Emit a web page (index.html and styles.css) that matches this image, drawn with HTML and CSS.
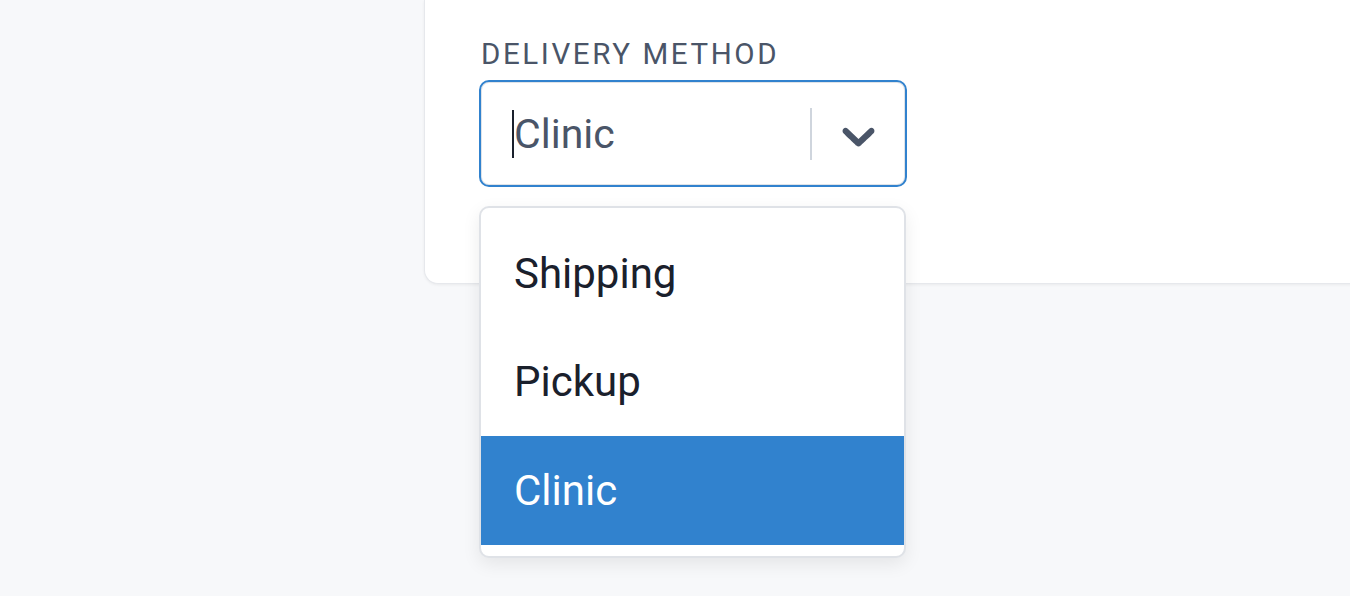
FILE: index.html
```html
<!DOCTYPE html>
<html lang="en">
<head>
<meta charset="utf-8">
<title>Delivery method</title>
<link rel="stylesheet" href="styles.css">
</head>
<body>
<div class="page">
  <section class="card">
    <label class="field-label">Delivery method</label>
    <div class="select">
      <div class="select-value">
        <span class="caret"></span><span class="value-text">Clinic</span>
      </div>
      <div class="indicators">
        <span class="separator"></span>
        <span class="dropdown-indicator">
          <svg viewBox="0 0 20 20" width="55" height="55" aria-hidden="true"><path d="M4.516 7.548c0.436-0.446 1.043-0.481 1.576 0l3.908 3.747 3.908-3.747c0.533-0.481 1.141-0.446 1.574 0 0.436 0.445 0.408 1.197 0 1.615-0.406 0.418-4.695 4.502-4.695 4.502-0.217 0.223-0.502 0.335-0.787 0.335s-0.57-0.112-0.789-0.335c0 0-4.287-4.084-4.695-4.502s-0.436-1.17 0-1.615z"/></svg>
        </span>
      </div>
    </div>
  </section>
  <ul class="menu">
    <li class="option">Shipping</li>
    <li class="option">Pickup</li>
    <li class="option option-selected">Clinic</li>
  </ul>
</div>
</body>
</html>
```

FILE: styles.css
```css
html, body {
  margin: 0;
  padding: 0;
}
body {
  background: #f7f8fa;
  font-family: Roboto, "Liberation Sans", Arial, sans-serif;
  overflow: hidden;
  width: 1350px;
  height: 596px;
}
.page {
  position: relative;
  height: 596px;
  padding-top: 0.02px;
}
.card {
  margin-left: 424px;
  width: 960px;
  box-sizing: border-box;
  padding: 37px 0 96px 54px;
  background: #ffffff;
  border: 1px solid #e6e8ec;
  border-top: none;
  border-radius: 0 0 0 14px;
  box-shadow: 0 1px 3px rgba(0, 0, 0, 0.06);
}
.field-label {
  display: block;
  font-size: 29.5px;
  line-height: 35px;
  letter-spacing: 2.6px;
  text-transform: uppercase;
  color: #4a5568;
  margin-bottom: 8px;
  padding-left: 2px;
}
.select {
  display: flex;
  align-items: center;
  width: 428px;
  height: 107px;
  box-sizing: border-box;
  border: 2px solid #3182ce;
  border-radius: 10px;
  background: #fff;
  box-shadow: inset 0 0 0 1px #dfe3e8;
}
.select-value {
  flex: 1;
  display: flex;
  align-items: center;
  padding-left: 31px;
}
.caret {
  width: 2px;
  height: 48px;
  background: #1a202c;
}
.value-text {
  font-size: 41px;
  color: #4a5568;
}
.indicators {
  display: flex;
  align-items: center;
  height: 100%;
}
.separator {
  width: 2px;
  height: 52px;
  background: #cfd5dd;
}
.dropdown-indicator {
  width: 93px;
  display: flex;
  justify-content: center;
  align-items: center;
  fill: #4a5568;
  padding-top: 3px;
}
.menu {
  position: absolute;
  top: 206px;
  left: 479px;
  width: 427px;
  box-sizing: border-box;
  margin: 0;
  padding: 11px 0;
  list-style: none;
  background: #fff;
  border: 2px solid #dfe2e7;
  border-radius: 10px;
  box-shadow: 0 6px 18px rgba(0, 0, 0, 0.08);
  overflow: hidden;
}
.option {
  height: 108.5px;
  display: flex;
  align-items: center;
  padding-left: 33px;
  font-size: 42px;
  color: #1a202c;
}
.option-selected {
  background: #3182ce;
  color: #ffffff;
}
```
